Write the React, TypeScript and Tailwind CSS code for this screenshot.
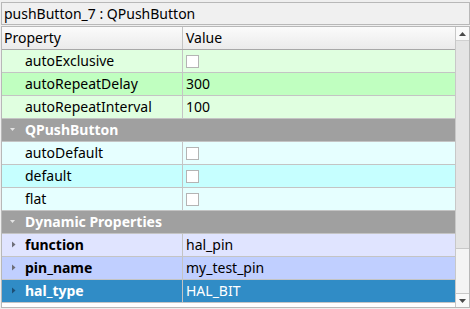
type Row =
  | { kind: "group"; label: string }
  | {
      kind: "prop";
      label: string;
      value?: string;
      check?: boolean;
      bg: string;
      dyn?: boolean;
      selected?: boolean;
    };

const rows: Row[] = [
  { kind: "prop", label: "autoExclusive", check: true, bg: "bg-[#e0ffe0]" },
  { kind: "prop", label: "autoRepeatDelay", value: "300", bg: "bg-[#c0ffc0]" },
  { kind: "prop", label: "autoRepeatInterval", value: "100", bg: "bg-[#e0ffe0]" },
  { kind: "group", label: "QPushButton" },
  { kind: "prop", label: "autoDefault", check: true, bg: "bg-[#e6ffff]" },
  { kind: "prop", label: "default", check: true, bg: "bg-[#c6ffff]" },
  { kind: "prop", label: "flat", check: true, bg: "bg-[#e6ffff]" },
  { kind: "group", label: "Dynamic Properties" },
  { kind: "prop", label: "function", value: "hal_pin", bg: "bg-[#e0e4ff]", dyn: true },
  { kind: "prop", label: "pin_name", value: "my_test_pin", bg: "bg-[#c0cfff]", dyn: true },
  { kind: "prop", label: "hal_type", value: "HAL_BIT", bg: "bg-[#308cc6]", dyn: true, selected: true },
];

function Checkbox() {
  return <div className="h-[13px] w-[13px] border border-[#b4b4b4] bg-white" />;
}

function PropRow({ row }: { row: Row }) {
  if (row.kind === "group") {
    return (
      <div className="flex h-[23px] items-center border-b border-[#c4c4c4] bg-[#a0a0a0] text-white font-bold">
        <svg width="23" height="22" viewBox="0 0 23 22" className="shrink-0">
          <polygon points="8,9 13,9 10.5,12" fill="#e4e4e4" />
        </svg>
        <span>{row.label}</span>
      </div>
    );
  }
  const sel = row.selected;
  return (
    <div className={`flex h-[23px] border-b border-[#c4c4c4] ${row.bg} ${sel ? "text-white" : "text-black"}`}>
      <div className="flex w-[181px] shrink-0 items-center border-r border-[#c4c4c4]">
        <svg width="23" height="22" viewBox="0 0 23 22" className="shrink-0">
          {row.dyn && (
            <polygon points="10,7.5 13.5,10.5 10,13.5" fill={sel ? "#1d4f75" : "#6e6e78"} />
          )}
        </svg>
        <span className={row.dyn ? "font-bold" : ""}>{row.label}</span>
      </div>
      <div className="flex flex-1 items-center pl-[3px]">
        {row.check ? <Checkbox /> : <span>{row.value}</span>}
      </div>
    </div>
  );
}

export default function App() {
  return (
    <div
      className="flex h-[309px] w-[470px] flex-col bg-[#efefef] text-[14px] leading-none text-black"
      style={{ fontFamily: '"Noto Sans", "Open Sans", sans-serif' }}
    >
      <div className="ml-[1px] mt-[2px] flex h-[23px] items-center border border-[#b8b8b8] bg-[#f0f0f0] px-[2px]">
        pushButton_7 : QPushButton
      </div>

      <div className="ml-[1px] mt-[1px] flex h-[282px] border border-[#b8b8b8] bg-white">
        <div className="flex flex-1 flex-col overflow-hidden">
          <div className="flex h-[23px] shrink-0 border-b border-[#a8a8a8] bg-gradient-to-b from-[#fbfbfb] to-[#ebebeb]">
            <div className="flex w-[181px] items-center border-r border-[#c4c4c4] pl-[2px]">Property</div>
            <div className="flex flex-1 items-center pl-[3px]">Value</div>
          </div>
          {rows.map((r) => (
            <PropRow key={r.label} row={r} />
          ))}
        </div>

        <div className="flex w-[14px] shrink-0 flex-col border-l border-[#c8c8c8] bg-[#e4e4e4]">
          <div className="flex h-[14px] items-center justify-center border-b border-[#d0d0d0] bg-[#fafafa]">
            <svg width="7" height="4" viewBox="0 0 7 4">
              <polygon points="0,4 7,4 3.5,0" fill="#4a4a4a" />
            </svg>
          </div>
          <div className="flex-1" />
          <div className="h-[46px] border-y border-[#c8c8c8] bg-[#f4f4f4]" />
          <div className="flex h-[13px] items-center justify-center bg-[#fafafa]">
            <svg width="7" height="4" viewBox="0 0 7 4">
              <polygon points="0,0 7,0 3.5,4" fill="#4a4a4a" />
            </svg>
          </div>
        </div>
      </div>
    </div>
  );
}
